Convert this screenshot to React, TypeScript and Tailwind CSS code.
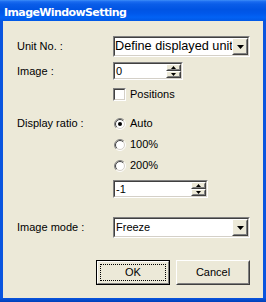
import React from "react";

const SANS = "font-['Liberation_Sans',Arial,sans-serif]";

function Sunken({ className, children }: { className: string; children?: React.ReactNode }) {
  return (
    <div className={`border border-t-[#808080] border-l-[#808080] border-b-white border-r-white ${className}`}>
      <div className="flex h-full w-full items-stretch overflow-hidden border border-t-[#404040] border-l-[#404040] border-b-[#d4d0c8] border-r-[#d4d0c8] bg-white">
        {children}
      </div>
    </div>
  );
}

function Raised({ className, children }: { className: string; children?: React.ReactNode }) {
  return (
    <div className={`border border-t-white border-l-white border-b-[#404040] border-r-[#404040] ${className}`}>
      <div className="flex h-full w-full items-center justify-center border border-t-[#ECE9D8] border-l-[#ECE9D8] border-b-[#808080] border-r-[#808080] bg-[#ECE9D8]">
        {children}
      </div>
    </div>
  );
}

function DownTri() {
  return (
    <svg width="7" height="4" viewBox="0 0 7 4">
      <path d="M0 0H7L3.5 4Z" fill="black" />
    </svg>
  );
}

function SmallTri({ up }: { up?: boolean }) {
  return (
    <svg width="5" height="3" viewBox="0 0 5 3">
      {up ? <path d="M0 3H5L2.5 0Z" fill="black" /> : <path d="M0 0H5L2.5 3Z" fill="black" />}
    </svg>
  );
}

function Combo({ text, big }: { text: string; big?: boolean }) {
  return (
    <Sunken className="h-[21px] w-[137px]">
      <div
        className={`flex flex-1 items-center overflow-hidden whitespace-nowrap text-black ${
          big ? "pl-0 text-[12.7px]" : "pl-[1px] text-[11px]"
        }`}
      >
        {text}
      </div>
      <Raised className="h-full w-[16px] shrink-0">
        <DownTri />
      </Raised>
    </Sunken>
  );
}

function Spin({ value, w }: { value: string; w: string }) {
  return (
    <Sunken className={`h-[18px] ${w}`}>
      <div className="flex flex-1 items-center pl-[1px] text-[11px] text-black">{value}</div>
      <div className="flex w-[15px] shrink-0 flex-col">
        <Raised className="h-[7px] w-full">
          <SmallTri up />
        </Raised>
        <Raised className="h-[7px] w-full">
          <SmallTri />
        </Raised>
      </div>
    </Sunken>
  );
}

function Radio({ checked }: { checked?: boolean }) {
  return (
    <svg width="12" height="12" viewBox="0 0 12 12" className="shrink-0">
      <circle cx="6" cy="6" r="5" fill="white" />
      <path d="M2.111 9.889A5.5 5.5 0 0 1 9.889 2.111" fill="none" stroke="#808080" />
      <path d="M9.889 2.111A5.5 5.5 0 0 1 2.111 9.889" fill="none" stroke="#ffffff" />
      <path d="M2.818 9.182A4.5 4.5 0 0 1 9.182 2.818" fill="none" stroke="#404040" />
      <path d="M9.182 2.818A4.5 4.5 0 0 1 2.818 9.182" fill="none" stroke="#d4d0c8" />
      {checked && <circle cx="6" cy="6" r="2" fill="black" />}
    </svg>
  );
}

function RadioRow({ label, checked }: { label: string; checked?: boolean }) {
  return (
    <div className="flex h-[13px] items-center gap-[4px] pl-[1px]">
      <Radio checked={checked} />
      <span className="text-[11px] leading-none text-black">{label}</span>
    </div>
  );
}

function Label({ children }: { children: React.ReactNode }) {
  return <div className="w-[96px] shrink-0 text-[11px] leading-none text-black">{children}</div>;
}

export default function App() {
  return (
    <div className={`flex h-[302px] w-[266px] flex-col bg-[#0A55DF] ${SANS}`}>
      <div className="h-[21px] shrink-0 bg-[linear-gradient(to_bottom,#3D8EF8_0%,#1A6BF0_8%,#0A5DE8_20%,#0054E3_45%,#0058EB_65%,#0262F4_82%,#0058E6_100%)] pl-[4px] pt-[7px] font-['DejaVu_Sans',sans-serif] text-[11px] font-bold leading-none tracking-[-0.6px] text-white">
        ImageWindowSetting
      </div>
      <div className="mx-[3px] flex flex-1 flex-col bg-[#ECE9D8] pl-[14px] pt-[15px]">
        <div className="flex h-[21px] items-center">
          <Label>Unit No. :</Label>
          <Combo text="Define displayed unit" big />
        </div>
        <div className="mt-[5px] flex h-[18px] items-center">
          <Label>Image :</Label>
          <Spin value="0" w="w-[70px]" />
        </div>
        <div className="mt-[8px] flex h-[13px] items-center pl-[96px]">
          <Sunken className="h-[13px] w-[13px] shrink-0" />
          <span className="ml-[4px] text-[11px] leading-none text-black">Positions</span>
        </div>
        <div className="mt-[16px] flex">
          <div className="flex h-[13px] items-center">
            <Label>Display ratio :</Label>
          </div>
          <div className="flex flex-col gap-[8px]">
            <RadioRow label="Auto" checked />
            <RadioRow label="100%" />
            <RadioRow label="200%" />
            <Spin value="-1" w="w-[95px]" />
          </div>
        </div>
        <div className="mt-[19px] flex h-[21px] items-center">
          <Label>Image mode :</Label>
          <Combo text="Freeze" />
        </div>
        <div className="ml-[79px] mt-[22px] flex gap-[6px]">
          <div className="h-[25px] w-[74px] border border-black">
            <div className="h-full w-full border border-t-white border-l-white border-b-[#808080] border-r-[#808080] bg-[#ECE9D8] p-[2px]">
              <div className="flex h-full w-full items-center justify-center border border-dotted border-black text-[11px] text-black">
                OK
              </div>
            </div>
          </div>
          <Raised className="h-[25px] w-[74px]">
            <span className="text-[11px] text-black">Cancel</span>
          </Raised>
        </div>
      </div>
      <div className="h-[4px] shrink-0 bg-[linear-gradient(to_bottom,#0A55DF,#0040B8)]" />
    </div>
  );
}
